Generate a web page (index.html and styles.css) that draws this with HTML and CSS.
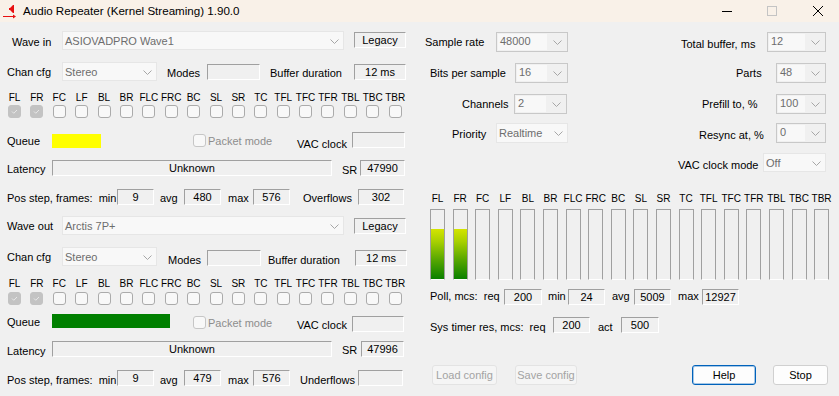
FILE: index.html
```html
<!DOCTYPE html>
<html>
<head>
<meta charset="utf-8">
<title>Audio Repeater</title>
<link rel="stylesheet" href="styles.css">
</head>
<body>
<div class="titlebar">
  <svg class="app-icon" width="16" height="16" viewBox="0 0 16 16"><path d="M8 5h1l3-3h1v8h-1l-3-3H8z" fill="#e81010"/><path d="M2 13.5h11" stroke="#e81010" fill="none"/><path d="M12 11.5l3 2-3 2z" fill="#e81010"/></svg>
  <span class="title">Audio Repeater (Kernel Streaming) 1.90.0</span>
  <div class="wincontrols">
    <svg class="wc wc-min" width="10" height="10" viewBox="0 0 10 10"><path d="M0 4.5h10" stroke="#000" fill="none"/></svg>
    <svg class="wc wc-max" width="10" height="10" viewBox="0 0 10 10"><rect x="0.5" y="0.5" width="9" height="9" stroke="#c4c4c4" fill="none"/></svg>
    <svg class="wc wc-close" width="10" height="10" viewBox="0 0 10 10"><path d="M0 0L10 10M10 0L0 10" stroke="#000" fill="none"/></svg>
  </div>
</div>
<div class="main">
  <div class="left">
    <div class="row h30">
      <span class="lbl ml5 w50 mt5">Wave in</span>
      <div class="combo flat w282"><span class="cv">ASIOVADPRO Wave1</span><svg class="chev" width="9" height="5" viewBox="0 0 9 5"><path d="M0.5 0.5L4.5 4.5L8.5 0.5"/></svg></div>
      <div class="box ml10 w52 mt1">Legacy</div>
    </div>
    <div class="row h30">
      <span class="lbl w55 mt5">Chan cfg</span>
      <div class="combo flat w95 mt1"><span class="cv">Stereo</span><svg class="chev" width="9" height="5" viewBox="0 0 9 5"><path d="M0.5 0.5L4.5 4.5L8.5 0.5"/></svg></div>
      <span class="lbl ml10 w40 mt6">Modes</span>
      <div class="box w53 mt3"></div>
      <span class="lbl ml10 w84 mt6">Buffer duration</span>
      <div class="box w52 mt3">12 ms</div>
    </div>
    <div class="row h40">
      <div class="chgrid">
        <div class="ch"><span class="chl">FL</span><span class="cb on"><svg width="11" height="11" viewBox="0 0 11 11"><path d="M3 5.5L4.8 7.3L8 4" stroke="#e8e8e8" fill="none"/></svg></span></div>
        <div class="ch"><span class="chl">FR</span><span class="cb on"><svg width="11" height="11" viewBox="0 0 11 11"><path d="M3 5.5L4.8 7.3L8 4" stroke="#e8e8e8" fill="none"/></svg></span></div>
        <div class="ch"><span class="chl">FC</span><span class="cb"></span></div>
        <div class="ch"><span class="chl">LF</span><span class="cb"></span></div>
        <div class="ch"><span class="chl">BL</span><span class="cb"></span></div>
        <div class="ch"><span class="chl">BR</span><span class="cb"></span></div>
        <div class="ch"><span class="chl">FLC</span><span class="cb"></span></div>
        <div class="ch"><span class="chl">FRC</span><span class="cb"></span></div>
        <div class="ch"><span class="chl">BC</span><span class="cb"></span></div>
        <div class="ch"><span class="chl">SL</span><span class="cb"></span></div>
        <div class="ch"><span class="chl">SR</span><span class="cb"></span></div>
        <div class="ch"><span class="chl">TC</span><span class="cb"></span></div>
        <div class="ch"><span class="chl">TFL</span><span class="cb"></span></div>
        <div class="ch"><span class="chl">TFC</span><span class="cb"></span></div>
        <div class="ch"><span class="chl">TFR</span><span class="cb"></span></div>
        <div class="ch"><span class="chl">TBL</span><span class="cb"></span></div>
        <div class="ch"><span class="chl">TBC</span><span class="cb"></span></div>
        <div class="ch"><span class="chl">TBR</span><span class="cb"></span></div>
      </div>
    </div>
    <div class="row h29">
      <span class="lbl w45 mt4">Queue</span>
      <div class="qbar yellow w49 mt3"></div>
      <span class="cb dis ml92 mt3"></span>
      <span class="lbl gray ml2 w89 mt4">Packet mode</span>
      <span class="lbl w55 mt7">VAC clock</span>
      <div class="box w53 mt1"></div>
    </div>
    <div class="row h29">
      <span class="lbl w45 mt3">Latency</span>
      <div class="box w280">Unknown</div>
      <span class="lbl ml10 w18 mt4">SR</span>
      <div class="box w45">47990</div>
    </div>
    <div class="row h26">
      <span class="lbl w110 mt3">Pos step, frames:&nbsp; min</span>
      <div class="box w37">9</div>
      <span class="lbl ml6 w24 mt3">avg</span>
      <div class="box w37">480</div>
      <span class="lbl ml7 w25 mt3">max</span>
      <div class="box w37">576</div>
      <span class="lbl ml13 w55 mt3">Overflows</span>
      <div class="box w46">302</div>
    </div>
    <div class="row h32">
      <span class="lbl w55 mt5">Wave out</span>
      <div class="combo flat w282 mt1"><span class="cv">Arctis 7P+</span><svg class="chev" width="9" height="5" viewBox="0 0 9 5"><path d="M0.5 0.5L4.5 4.5L8.5 0.5"/></svg></div>
      <div class="box ml10 w52 mt3">Legacy</div>
    </div>
    <div class="row h30">
      <span class="lbl w55 mt4">Chan cfg</span>
      <div class="combo flat w95"><span class="cv">Stereo</span><svg class="chev" width="9" height="5" viewBox="0 0 9 5"><path d="M0.5 0.5L4.5 4.5L8.5 0.5"/></svg></div>
      <span class="lbl ml11 w39 mt7">Modes</span>
      <div class="box w54 mt3"></div>
      <span class="lbl ml7 w87 mt7">Buffer duration</span>
      <div class="box w52 mt3">12 ms</div>
    </div>
    <div class="row h36">
      <div class="chgrid second">
        <div class="ch"><span class="chl">FL</span><span class="cb on"><svg width="11" height="11" viewBox="0 0 11 11"><path d="M3 5.5L4.8 7.3L8 4" stroke="#e8e8e8" fill="none"/></svg></span></div>
        <div class="ch"><span class="chl">FR</span><span class="cb on"><svg width="11" height="11" viewBox="0 0 11 11"><path d="M3 5.5L4.8 7.3L8 4" stroke="#e8e8e8" fill="none"/></svg></span></div>
        <div class="ch"><span class="chl">FC</span><span class="cb"></span></div>
        <div class="ch"><span class="chl">LF</span><span class="cb"></span></div>
        <div class="ch"><span class="chl">BL</span><span class="cb"></span></div>
        <div class="ch"><span class="chl">BR</span><span class="cb"></span></div>
        <div class="ch"><span class="chl">FLC</span><span class="cb"></span></div>
        <div class="ch"><span class="chl">FRC</span><span class="cb"></span></div>
        <div class="ch"><span class="chl">BC</span><span class="cb"></span></div>
        <div class="ch"><span class="chl">SL</span><span class="cb"></span></div>
        <div class="ch"><span class="chl">SR</span><span class="cb"></span></div>
        <div class="ch"><span class="chl">TC</span><span class="cb"></span></div>
        <div class="ch"><span class="chl">TFL</span><span class="cb"></span></div>
        <div class="ch"><span class="chl">TFC</span><span class="cb"></span></div>
        <div class="ch"><span class="chl">TFR</span><span class="cb"></span></div>
        <div class="ch"><span class="chl">TBL</span><span class="cb"></span></div>
        <div class="ch"><span class="chl">TBC</span><span class="cb"></span></div>
        <div class="ch"><span class="chl">TBR</span><span class="cb"></span></div>
      </div>
    </div>
    <div class="row h28">
      <span class="lbl w45 mt3">Queue</span>
      <div class="qbar green w118 mt1"></div>
      <span class="cb dis ml23 mt3"></span>
      <span class="lbl gray ml2 w89 mt4">Packet mode</span>
      <span class="lbl w55 mt6">VAC clock</span>
      <div class="box w52 mt3"></div>
    </div>
    <div class="row h29">
      <span class="lbl w45 mt4">Latency</span>
      <div class="box w280">Unknown</div>
      <span class="lbl ml10 w19 mt3">SR</span>
      <div class="box w43">47996</div>
    </div>
    <div class="row h26">
      <span class="lbl w110 mt4">Pos step, frames:&nbsp; min</span>
      <div class="box w37">9</div>
      <span class="lbl ml6 w24 mt4">avg</span>
      <div class="box w37">479</div>
      <span class="lbl ml7 w25 mt4">max</span>
      <div class="box w37">576</div>
      <span class="lbl ml10 w58 mt4">Underflows</span>
      <div class="box w45"></div>
    </div>
  </div>

  <div class="right">
    <div class="row h31">
      <span class="lbl ml10 w71 mt5">Sample rate</span>
      <div class="combo boxed w72 mt1"><span class="cv">48000</span><svg class="chev" width="9" height="5" viewBox="0 0 9 5"><path d="M0.5 0.5L4.5 4.5L8.5 0.5"/></svg></div>
      <span class="lbl ml113 w86 mt7">Total buffer, ms</span>
      <div class="combo boxed w59 mt1"><span class="cv">12</span><svg class="chev" width="9" height="5" viewBox="0 0 9 5"><path d="M0.5 0.5L4.5 4.5L8.5 0.5"/></svg></div>
    </div>
    <div class="row h31">
      <span class="lbl ml15 w85 mt5">Bits per sample</span>
      <div class="combo boxed w53 mt1"><span class="cv">16</span><svg class="chev" width="9" height="5" viewBox="0 0 9 5"><path d="M0.5 0.5L4.5 4.5L8.5 0.5"/></svg></div>
      <span class="lbl ml168 w40 mt5">Parts</span>
      <div class="combo boxed w50 mt1"><span class="cv">48</span><svg class="chev" width="9" height="5" viewBox="0 0 9 5"><path d="M0.5 0.5L4.5 4.5L8.5 0.5"/></svg></div>
    </div>
    <div class="row h30">
      <span class="lbl ml47 w52 mt5">Channels</span>
      <div class="combo boxed w53 mt1"><span class="cv">2</span><svg class="chev" width="9" height="5" viewBox="0 0 9 5"><path d="M0.5 0.5L4.5 4.5L8.5 0.5"/></svg></div>
      <span class="lbl ml135 w74 mt5">Prefill to, %</span>
      <div class="combo boxed w50 mt1"><span class="cv">100</span><svg class="chev" width="9" height="5" viewBox="0 0 9 5"><path d="M0.5 0.5L4.5 4.5L8.5 0.5"/></svg></div>
    </div>
    <div class="row h30">
      <span class="lbl ml37 w44 mt5">Priority</span>
      <div class="combo flat tall w72"><span class="cv">Realtime</span><svg class="chev" width="9" height="5" viewBox="0 0 9 5"><path d="M0.5 0.5L4.5 4.5L8.5 0.5"/></svg></div>
      <span class="lbl ml131 w77 mt6">Resync at, %</span>
      <div class="combo boxed w50"><span class="cv">0</span><svg class="chev" width="9" height="5" viewBox="0 0 9 5"><path d="M0.5 0.5L4.5 4.5L8.5 0.5"/></svg></div>
    </div>
    <div class="row h39">
      <span class="lbl ml263 w85 mt6">VAC clock mode</span>
      <div class="combo flat w63"><span class="cv">Off</span><svg class="chev" width="9" height="5" viewBox="0 0 9 5"><path d="M0.5 0.5L4.5 4.5L8.5 0.5"/></svg></div>
    </div>
    <div class="meters">
      <div class="mcol"><span class="chl">FL</span><div class="meter"><div class="fill" style="height:50px"></div></div></div>
      <div class="mcol"><span class="chl">FR</span><div class="meter"><div class="fill" style="height:50px"></div></div></div>
      <div class="mcol"><span class="chl">FC</span><div class="meter"></div></div>
      <div class="mcol"><span class="chl">LF</span><div class="meter"></div></div>
      <div class="mcol"><span class="chl">BL</span><div class="meter"></div></div>
      <div class="mcol"><span class="chl">BR</span><div class="meter"></div></div>
      <div class="mcol"><span class="chl">FLC</span><div class="meter"></div></div>
      <div class="mcol"><span class="chl">FRC</span><div class="meter"></div></div>
      <div class="mcol"><span class="chl">BC</span><div class="meter"></div></div>
      <div class="mcol"><span class="chl">SL</span><div class="meter"></div></div>
      <div class="mcol"><span class="chl">SR</span><div class="meter"></div></div>
      <div class="mcol"><span class="chl">TC</span><div class="meter"></div></div>
      <div class="mcol"><span class="chl">TFL</span><div class="meter"></div></div>
      <div class="mcol"><span class="chl">TFC</span><div class="meter"></div></div>
      <div class="mcol"><span class="chl">TFR</span><div class="meter"></div></div>
      <div class="mcol"><span class="chl">TBL</span><div class="meter"></div></div>
      <div class="mcol"><span class="chl">TBC</span><div class="meter"></div></div>
      <div class="mcol"><span class="chl">TBR</span><div class="meter"></div></div>
    </div>
    <div class="row h28 poll">
      <span class="lbl ml15 w74 mt1">Poll, mcs:&nbsp; req</span>
      <div class="box w38">200</div>
      <span class="lbl ml6 w20 mt1">min</span>
      <div class="box w37">24</div>
      <span class="lbl ml7 w22 mt1">avg</span>
      <div class="box w37">5009</div>
      <span class="lbl ml7 w24 mt1">max</span>
      <div class="box w37">12927</div>
    </div>
    <div class="row h48">
      <span class="lbl ml15 w123 mt4">Sys timer res, mcs:&nbsp; req</span>
      <div class="box w37">200</div>
      <span class="lbl ml8 w23 mt4">act</span>
      <div class="box w38">500</div>
    </div>
    <div class="row h20">
      <div class="btn dis ml17 w65">Load config</div>
      <div class="btn dis ml18 w62">Save config</div>
      <div class="btn def ml115 w64">Help</div>
      <div class="btn ml17 w55">Stop</div>
    </div>
  </div>
</div>
</body>
</html>
```

FILE: styles.css
```css
* { box-sizing: border-box; }
html, body { margin: 0; padding: 0; }
body {
  width: 839px;
  height: 396px;
  overflow: hidden;
  background: #f0f0f0;
  font-family: "Liberation Sans", Arial, sans-serif;
  font-size: 11px;
  color: #000;
}

/* title bar */
.titlebar {
  height: 22px;
  background: #f9f1e8;
  display: flex;
  align-items: center;
}
.app-icon { margin-left: 1px; flex: none; }
.title {
  margin-left: 6px;
  font-size: 11.6px;
  line-height: 14px;
  color: #000;
}
.wincontrols {
  margin-left: auto;
  display: flex;
  align-items: center;
  margin-right: 16px;
}
.wc { display: block; }
.wc-min { margin-top: 1px; }
.wc-max { margin-left: 35px; }
.wc-close { margin-left: 36px; }

/* main layout */
.main { display: flex; }
.left { width: 415px; padding: 9px 0 0 7px; }
.right { flex: 1; padding-top: 9px; }

.row { display: flex; align-items: flex-start; }
.h20 { height: 20px; }
.h26 { height: 26px; }
.h28 { height: 28px; }
.h29 { height: 29px; }
.h30 { height: 30px; }
.h31 { height: 31px; }
.h32 { height: 32px; }
.h36 { height: 36px; }
.h39 { height: 39px; }
.h40 { height: 40px; }
.h48 { height: 48px; }

.lbl {
  flex: none;
  line-height: 13px;
  white-space: nowrap;
}
.gray { color: #8d8d8d; }

/* spacing utilities */
.mt1 { margin-top: 1px; }
.mt3 { margin-top: 3px; }
.mt4 { margin-top: 4px; }
.mt5 { margin-top: 5px; }
.mt6 { margin-top: 6px; }
.mt7 { margin-top: 7px; }

.ml2 { margin-left: 2px; }
.ml5 { margin-left: 5px; }
.ml6 { margin-left: 6px; }
.ml7 { margin-left: 7px; }
.ml8 { margin-left: 8px; }
.ml10 { margin-left: 10px; }
.ml11 { margin-left: 11px; }
.ml13 { margin-left: 13px; }
.ml15 { margin-left: 15px; }
.ml17 { margin-left: 17px; }
.ml18 { margin-left: 18px; }
.ml23 { margin-left: 23px; }
.ml37 { margin-left: 37px; }
.ml47 { margin-left: 47px; }
.ml92 { margin-left: 92px; }
.ml113 { margin-left: 113px; }
.ml115 { margin-left: 115px; }
.ml131 { margin-left: 131px; }
.ml135 { margin-left: 135px; }
.ml168 { margin-left: 168px; }
.ml263 { margin-left: 263px; }

.w18 { width: 18px; }
.w19 { width: 19px; }
.w20 { width: 20px; }
.w22 { width: 22px; }
.w23 { width: 23px; }
.w24 { width: 24px; }
.w25 { width: 25px; }
.w37 { width: 37px; }
.w38 { width: 38px; }
.w39 { width: 39px; }
.w40 { width: 40px; }
.w43 { width: 43px; }
.w44 { width: 44px; }
.w45 { width: 45px; }
.w46 { width: 46px; }
.w49 { width: 49px; }
.w50 { width: 50px; }
.w52 { width: 52px; }
.w53 { width: 53px; }
.w54 { width: 54px; }
.w55 { width: 55px; }
.w58 { width: 58px; }
.w59 { width: 59px; }
.w62 { width: 62px; }
.w63 { width: 63px; }
.w64 { width: 64px; }
.w65 { width: 65px; }
.w71 { width: 71px; }
.w72 { width: 72px; }
.w74 { width: 74px; }
.w77 { width: 77px; }
.w84 { width: 84px; }
.w85 { width: 85px; }
.w86 { width: 86px; }
.w87 { width: 87px; }
.w89 { width: 89px; }
.w95 { width: 95px; }
.w110 { width: 110px; }
.w118 { width: 118px; }
.w123 { width: 123px; }
.w280 { width: 280px; }
.w282 { width: 282px; }

/* static edge value boxes */
.box {
  flex: none;
  height: 16px;
  border-top: 1px solid #a0a0a0;
  border-left: 1px solid #a0a0a0;
  border-bottom: 1px solid #ffffff;
  border-right: 1px solid #ffffff;
  text-align: center;
  line-height: 14px;
  white-space: nowrap;
}

/* combo boxes */
.combo {
  flex: none;
  display: flex;
  align-items: center;
  color: #6d6d6d;
}
.combo .cv { flex: 1; white-space: nowrap; line-height: 13px; }
.chev { flex: none; display: block; }
.chev path { fill: none; stroke: #a6a6a6; stroke-width: 1; }
.combo.flat {
  height: 19px;
  background: #f8f8f8;
  border: 1px solid #e6e6e6;
  padding: 1px 4px 0 2px;
}
.combo.flat.tall { height: 20px; }
.combo.boxed {
  height: 20px;
  background: #f0f0f0;
  border: 1px solid #c8c8c8;
  padding: 1px 0;
}
.combo.boxed .cv {
  align-self: stretch;
  margin-left: 1px;
  background: #f8f8f8;
  padding: 1px 0 0 2px;
}
.combo.boxed .chev { margin: 0 5px 0 6px; }

/* channel checkboxes */
.chgrid {
  display: flex;
  margin-left: 1px;
  gap: 9.4px;
}
.ch {
  width: 13px;
  display: flex;
  flex-direction: column;
  align-items: center;
}
.chl { font-size: 10px; line-height: 13px; white-space: nowrap; }
.cb {
  flex: none;
  display: block;
  width: 13px;
  height: 13px;
  border: 1px solid #ababab;
  border-radius: 3px;
  background: #f8f8f8;
}
.ch .cb { margin-top: 1px; }
.chgrid.second .cb { margin-top: 2px; }
.cb svg { display: block; }
.cb.on { background: #c3c3c3; border-color: #c3c3c3; }
.cb.dis { border-color: #c6c6c6; }

.qbar { flex: none; height: 14px; }
.yellow { background: #ffff00; }
.green { background: #008000; }

/* meters */
.meters {
  display: flex;
  margin-left: 15px;
  gap: 7.6px;
  height: 97px;
}
.mcol {
  width: 15px;
  display: flex;
  flex-direction: column;
  align-items: center;
}
.meter {
  width: 15px;
  height: 71px;
  margin-top: 4px;
  border: 1px solid #a0a0a0;
  border-bottom-color: #ffffff;
  display: flex;
  align-items: flex-end;
}
.fill {
  width: 100%;
  background: linear-gradient(to bottom, #d4e400 0%, #a8d000 25%, #5aa800 60%, #0a8000 100%);
}

/* buttons */
.btn {
  flex: none;
  height: 20px;
  border: 1px solid #d0d0d0;
  border-radius: 3px;
  background: #fdfdfd;
  text-align: center;
  line-height: 18px;
  white-space: nowrap;
}
.btn.dis { color: #a3a3a3; background: #f5f5f5; border-color: #e3e3e3; }
.btn.def { border-color: #0062bb; box-shadow: inset 0 0 0 1px rgba(0, 98, 187, 0.35); }
```
